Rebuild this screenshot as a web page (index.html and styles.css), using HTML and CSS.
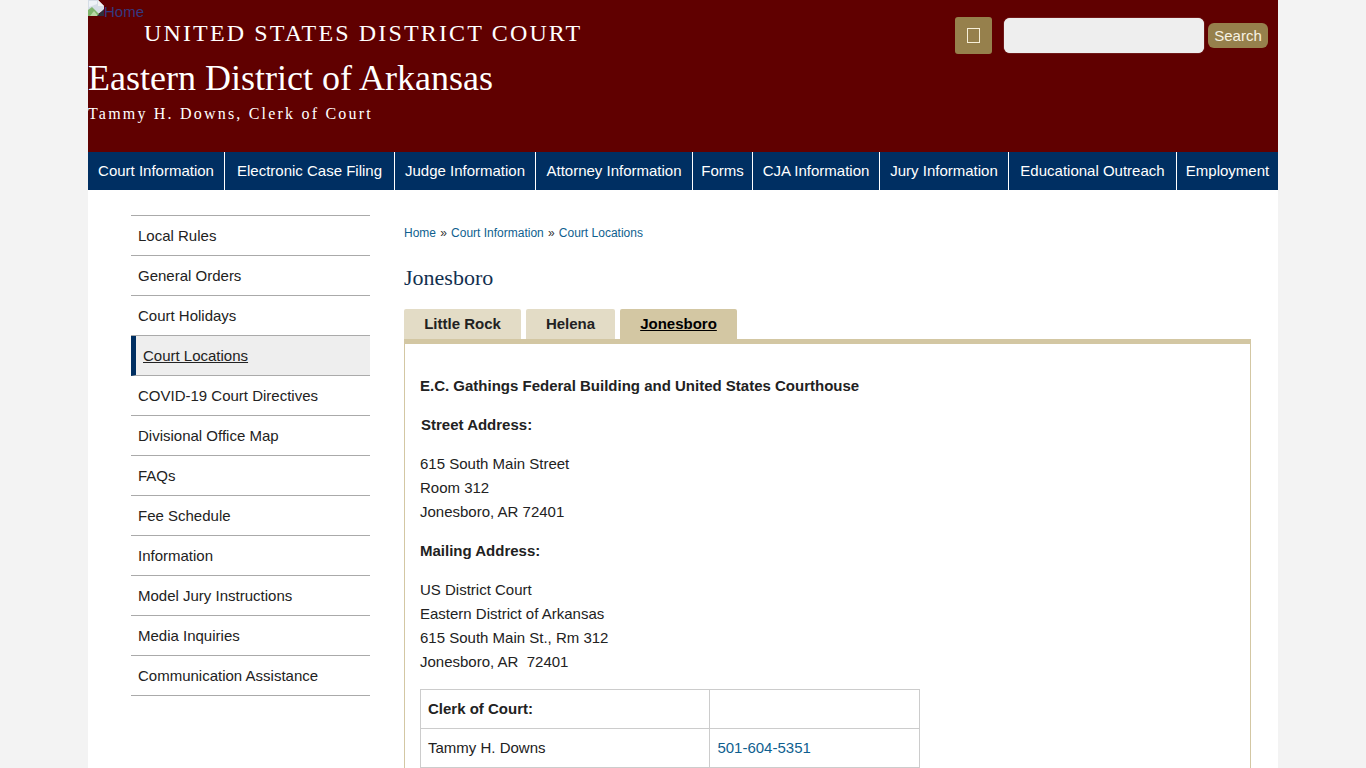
FILE: index.html
```html
<!DOCTYPE html>
<html lang="en">
<head>
  <meta charset="UTF-8" />
  <title>Jonesboro | Eastern District of Arkansas</title>
  <link rel="stylesheet" href="styles.css">
</head>
<body>
  <div class="page">
    <header class="site-header">
      <div class="branding">
        <a class="logo-link" href="#">
          <svg class="broken-img" width="16" height="16" viewBox="0 0 16 16" aria-hidden="true">
            <path d="M0 0H10L16 6V10L7 16H0Z" fill="#d5dde6"/>
            <path d="M10 0V6H16Z" fill="#f2f2f2"/>
            <path d="M1 1H9V4L1 7Z" fill="#eef2f7"/>
            <path d="M0 16V10L4 7L8 11L11 14V16Z" fill="#7fb56c"/>
            <path d="M2 16L6 11L10 16Z" fill="#b9d8a6"/>
            <path d="M9 16L16 9V16Z" fill="#2e2e3a"/>
          </svg>Home</a>
        <div class="court-name">UNITED STATES DISTRICT COURT</div>
        <div class="district-name">Eastern District of Arkansas</div>
        <div class="clerk-name">Tammy H. Downs, Clerk of Court</div>
      </div>
      <div class="header-tools">
        <button class="menu-btn" aria-label="Menu"><span class="tofu"></span></button>
        <input class="search-box" type="text" />
        <button class="search-btn">Search</button>
      </div>
    </header>

    <nav class="main-nav">
      <a href="#" class="w1">Court Information</a>
      <a href="#" class="w2">Electronic Case Filing</a>
      <a href="#" class="w3">Judge Information</a>
      <a href="#" class="w4">Attorney Information</a>
      <a href="#" class="w5">Forms</a>
      <a href="#" class="w6">CJA Information</a>
      <a href="#" class="w7">Jury Information</a>
      <a href="#" class="w8">Educational Outreach</a>
      <a href="#" class="w9">Employment</a>
    </nav>

    <div class="main">
      <ul class="side-menu">
        <li><a href="#">Local Rules</a></li>
        <li><a href="#">General Orders</a></li>
        <li><a href="#">Court Holidays</a></li>
        <li class="active"><a href="#">Court Locations</a></li>
        <li><a href="#">COVID-19 Court Directives</a></li>
        <li><a href="#">Divisional Office Map</a></li>
        <li><a href="#">FAQs</a></li>
        <li><a href="#">Fee Schedule</a></li>
        <li><a href="#">Information</a></li>
        <li><a href="#">Model Jury Instructions</a></li>
        <li><a href="#">Media Inquiries</a></li>
        <li><a href="#">Communication Assistance</a></li>
      </ul>

      <div class="content">
        <div class="breadcrumb">
          <a href="#">Home</a><span class="sep">»</span><a href="#">Court Information</a><span class="sep">»</span><a href="#">Court Locations</a>
        </div>
        <h1 class="page-title">Jonesboro</h1>

        <div class="tabs">
          <a href="#" class="tab tab-rock">Little Rock</a>
          <a href="#" class="tab tab-helena">Helena</a>
          <a href="#" class="tab tab-jonesboro active">Jonesboro</a>
        </div>

        <div class="panel">
          <p><strong>E.C. Gathings Federal Building and United States Courthouse</strong></p>
          <p class="nudge"><strong>Street Address:</strong></p>
          <p>615 South Main Street<br>Room 312<br>Jonesboro, AR 72401</p>
          <p><strong>Mailing Address:</strong></p>
          <p>US District Court<br>Eastern District of Arkansas<br>615 South Main St., Rm 312<br>Jonesboro, AR&nbsp; 72401</p>
          <table class="contact-table">
            <tr>
              <td class="col-name"><strong>Clerk of Court:</strong></td>
              <td class="col-phone"></td>
            </tr>
            <tr>
              <td>Tammy H. Downs</td>
              <td><a href="#">501-604-5351</a></td>
            </tr>
          </table>
        </div>
      </div>
    </div>
  </div>
</body>
</html>
```

FILE: styles.css
```css
html, body {
  height: 768px;
  overflow: hidden;
}

body {
  margin: 0;
  background: #f3f3f3;
  font-family: "Liberation Sans", Arial, sans-serif;
  font-size: 16px;
  color: #222;
}

a {
  color: #0f5f8f;
  text-decoration: none;
}

.page {
  width: 1190px;
  margin-left: 88px;
  background: #fff;
  height: 768px;
  overflow: hidden;
}

.site-header {
  background: #600000;
  height: 152px;
  display: flex;
  justify-content: space-between;
}

.branding {
  color: #fff;
  font-family: "Liberation Serif", "Times New Roman", serif;
}

.logo-link {
  display: block;
  height: 21px;
  font-family: "Liberation Sans", Arial, sans-serif;
  font-size: 15px;
  line-height: 24px;
  color: #35397f;
}

.broken-img {
  vertical-align: top;
}

.court-name {
  margin-left: 56px;
  font-size: 24px;
  line-height: 24px;
  letter-spacing: 2.15px;
}

.district-name {
  margin-top: 13px;
  font-size: 36px;
  line-height: 40px;
}

.clerk-name {
  margin-top: 6px;
  font-size: 16px;
  line-height: 20px;
  letter-spacing: 2.2px;
}

.header-tools {
  display: flex;
  align-items: flex-start;
  padding: 17px 10px 0 0;
}

.menu-btn {
  width: 37px;
  height: 37px;
  padding: 0;
  border: 0;
  border-radius: 3px;
  background: #96804c;
  display: flex;
  align-items: center;
  justify-content: center;
  margin-right: 12px;
}

.tofu {
  display: block;
  width: 11px;
  height: 13px;
  border: 1px solid #f7efd8;
}

.search-box {
  box-sizing: border-box;
  width: 200px;
  height: 35px;
  margin: 1px 4px 0 0;
  border: 0;
  border-radius: 6px;
  background: #eeeeee;
  box-shadow: 0 0 1px #fff;
}

.search-btn {
  width: 60px;
  height: 25px;
  margin-top: 6px;
  padding: 0;
  border: 0;
  border-radius: 6px;
  background: #96804c;
  color: #f7f2e2;
  font-family: "Liberation Sans", Arial, sans-serif;
  font-size: 15px;
}

.main-nav {
  background: #002f62;
  height: 38px;
  display: flex;
}

.main-nav a {
  box-sizing: border-box;
  color: #fff;
  font-size: 15px;
  line-height: 38px;
  text-align: center;
  border-right: 1px solid #fff;
  white-space: nowrap;
}

.main-nav a:last-child {
  border-right: 0;
}

.main-nav .w1 { width: 137px; }
.main-nav .w2 { width: 170px; }
.main-nav .w3 { width: 141px; }
.main-nav .w4 { width: 157px; }
.main-nav .w5 { width: 60px; }
.main-nav .w6 { width: 127px; }
.main-nav .w7 { width: 129px; }
.main-nav .w8 { width: 168px; }
.main-nav .w9 { width: 101px; }

.main {
  display: flex;
}

.side-menu {
  list-style: none;
  width: 239px;
  margin: 25px 0 0 43px;
  padding: 0;
  border-top: 1px solid #aaa;
}

.side-menu li {
  box-sizing: border-box;
  height: 40px;
  border-bottom: 1px solid #aaa;
  padding-left: 7px;
  line-height: 40px;
  font-size: 15px;
}

.side-menu a {
  color: #222;
}

.side-menu li.active {
  background: #eeeeee;
  border-left: 5px solid #002f62;
  padding-left: 7px;
}

.side-menu li.active a {
  text-decoration: underline;
}

.content {
  width: 847px;
  margin-left: 34px;
}

.breadcrumb {
  margin-top: 35px;
  font-size: 12px;
  line-height: 16px;
}

.breadcrumb .sep {
  margin: 0 4.2px;
  color: #333;
}

.page-title {
  margin: 23px 0 0;
  font-family: "Liberation Serif", "Times New Roman", serif;
  font-size: 22px;
  font-weight: normal;
  line-height: 28px;
  color: #12304f;
}

.tabs {
  display: flex;
  gap: 5px;
  margin-top: 17px;
}

.tab {
  box-sizing: border-box;
  height: 30px;
  line-height: 30px;
  text-align: center;
  background: #e3dcc6;
  color: #222;
  font-size: 15px;
  font-weight: bold;
  border-radius: 2px 2px 0 0;
}

.tab-rock { width: 117px; }
.tab-helena { width: 89px; }
.tab-jonesboro { width: 117px; }

.tab.active {
  background: #d3c7a3;
  color: #000;
  text-decoration: underline;
}

.panel {
  box-sizing: border-box;
  height: 429px;
  border: 1px solid #d3c7a3;
  border-top: 5px solid #d3c7a3;
  border-bottom: 0;
  padding: 30px 15px 0;
  font-size: 15px;
  line-height: 24px;
}

.panel p {
  margin: 0 0 15px;
}

.nudge {
  padding-left: 1px;
}

.contact-table {
  border-collapse: collapse;
  width: 500px;
}

.contact-table td {
  box-sizing: border-box;
  height: 39px;
  padding: 0 7px;
  border: 1px solid #ccc;
}

.col-name { width: 290px; }
.col-phone { width: 210px; }
```
